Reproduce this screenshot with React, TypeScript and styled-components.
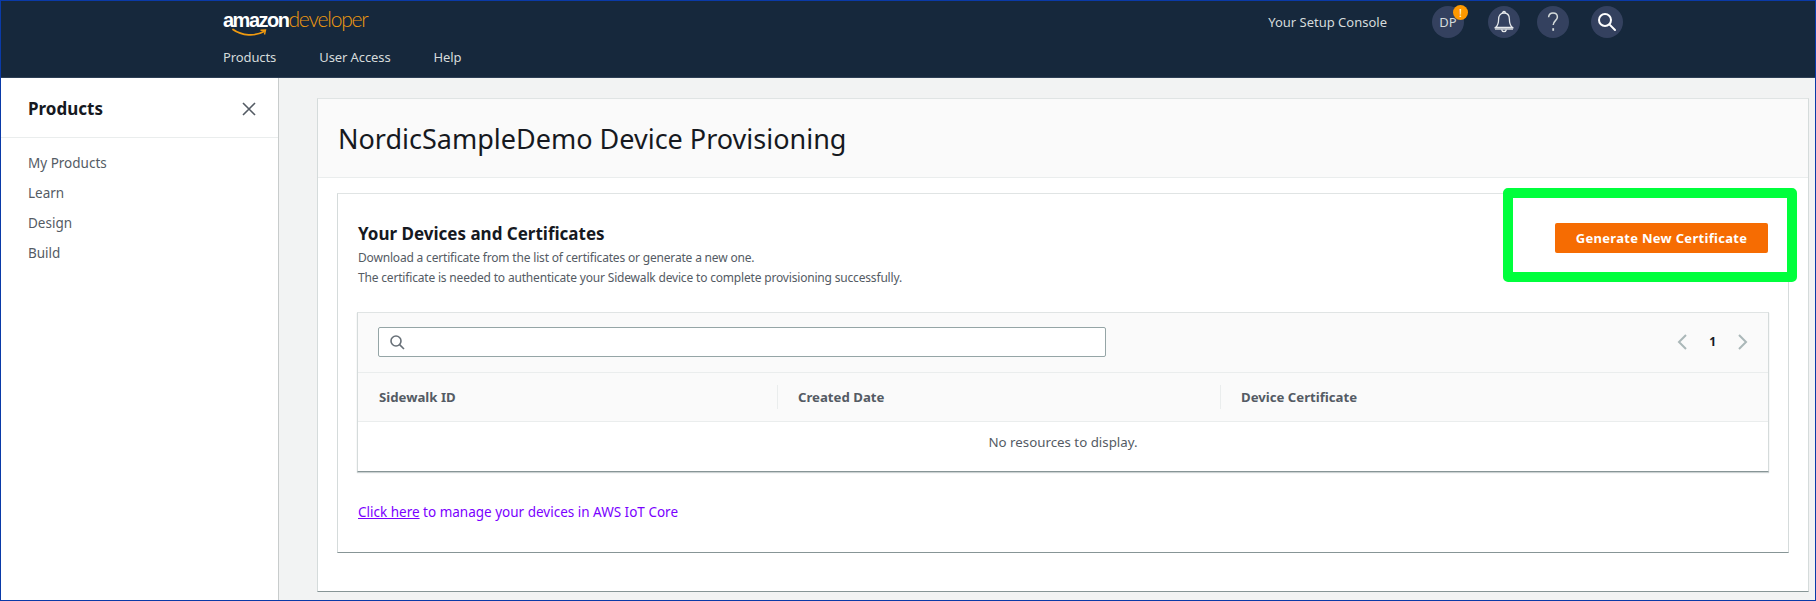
import React from "react";
import styled, { createGlobalStyle } from "styled-components";

const Global = createGlobalStyle`
  html, body { margin: 0; padding: 0; background: #f2f3f3; }
  * { box-sizing: border-box; }
  body { font-family: "Noto Sans", "Liberation Sans", sans-serif; color: #16191f; }
`;

const Frame = styled.div`
  position: relative;
  width: 1816px;
  height: 601px;
  border: 1px solid #0a3aa8;
  overflow: hidden;
  display: flex;
  flex-direction: column;
`;
const Header = styled.header`
  height: 77px;
  flex: none;
  background: #16283c;
  border-bottom: 1px solid #2d3f55;
  padding-left: 222px;
  display: flex;
  justify-content: space-between;
`;
const HeaderLeft = styled.div`
  display: flex;
  flex-direction: column;
`;
const Logo = styled.div`
  position: relative;
  display: flex;
  align-items: baseline;
  height: 33px;
  padding-top: 6px;
  line-height: 24px;
`;
const LogoBold = styled.span`
  font: 700 20px/24px "Liberation Sans", sans-serif;
  letter-spacing: -1.5px;
  color: #fff;
`;
const LogoLight = styled.span`
  font: 300 21px/24px "Lato", sans-serif;
  letter-spacing: -1.2px;
  color: #f09a10;
`;
const LogoSmile = styled.svg`
  position: absolute;
  left: 9px;
  top: 27px;
`;
const Nav = styled.nav`
  margin-top: 13px;
  display: flex;
  gap: 43px;
`;
const NavLink = styled.span`
  font-size: 13px;
  line-height: 20px;
  letter-spacing: -0.1px;
  color: #d5dbdb;
`;
const HeaderRight = styled.div`
  display: flex;
  align-items: flex-start;
  padding-top: 5px;
  padding-right: 192px;
`;
const ConsoleLink = styled.span`
  font-size: 13px;
  line-height: 32px;
  color: #d5dbdb;
  margin-right: 43px;
`;
const Circles = styled.div`
  display: flex;
  gap: 18px;
`;
const Circle = styled.div<{ $gap?: number }>`
  position: relative;
  width: 32px;
  height: 32px;
  border-radius: 50%;
  background: #34415f;
  color: #d5dbdb;
  display: flex;
  align-items: center;
  justify-content: center;
  font-size: 13px;
  margin-left: ${(p) => p.$gap ?? 0}px;
`;
const Badge = styled.span`
  position: absolute;
  right: -4px;
  top: -1px;
  width: 15px;
  height: 15px;
  border-radius: 50%;
  background: #ff9900;
  color: #fff;
  font-size: 11px;
  line-height: 15px;
  text-align: center;
`;
const Body = styled.div`
  flex: 1;
  display: flex;
  min-height: 0;
`;
const Sidebar = styled.aside`
  width: 278px;
  flex: none;
  background: #fff;
  border-right: 1px solid #c8cccc;
`;
const SideHead = styled.div`
  height: 60px;
  padding: 2px 22px 0 27px;
  border-bottom: 1px solid #eaeded;
  display: flex;
  align-items: center;
  justify-content: space-between;
`;
const SideTitle = styled.h2`
  margin: 0;
  font-size: 17px;
  font-weight: 700;
  color: #16191f;
`;
const SideList = styled.ul`
  list-style: none;
  margin: 0;
  padding: 10px 0 0 27px;
`;
const SideItem = styled.li`
  height: 30px;
  line-height: 30px;
  font-size: 13.5px;
  color: #545b64;
`;
const Main = styled.main`
  flex: 1;
  padding: 20px 6px 0 38px;
  background: #f2f3f3;
`;
const Card = styled.section`
  height: 494px;
  background: #fff;
  border: 1px solid #e0e4e4;
  border-bottom-color: #879596;
  border-left-color: #d5dbdb;
  border-right-color: #d5dbdb;
`;
const CardHead = styled.div`
  height: 79px;
  background: #fafafa;
  border-bottom: 1px solid #eaeded;
  padding-left: 20px;
  display: flex;
  align-items: center;
`;
const Title = styled.h1`
  margin: 0;
  font-size: 27px;
  font-weight: 400;
  color: #16191f;
`;
const Inner = styled.div`
  margin: 15px 19px 0 19px;
  height: 360px;
  border: 1px solid #e0e4e4;
  border-left-color: #d5dbdb;
  border-right-color: #d5dbdb;
  border-bottom-color: #879596;
  padding: 0 19px;
`;
const Intro = styled.div`
  height: 118px;
  padding: 27px 0 0 1px;
`;
const IntroTitle = styled.h3`
  margin: 0 0 1px;
  font-size: 17px;
  line-height: 26px;
  font-weight: 700;
  color: #16191f;
`;
const IntroText = styled.p`
  margin: 0;
  font-size: 12px;
  line-height: 20px;
  letter-spacing: -0.18px;
  color: #545b64;
`;
const Table = styled.div`
  height: 160px;
  border: 1px solid #e0e4e4;
  border-left-color: #d5dbdb;
  border-right-color: #d5dbdb;
  border-bottom-color: #879596;
  box-shadow: 0 1px 1px rgba(0, 28, 36, 0.2);
`;
const Toolbar = styled.div`
  height: 60px;
  background: #fafafa;
  border-bottom: 1px solid #eaeded;
  display: flex;
  align-items: center;
  justify-content: space-between;
  padding: 0 19px 2px 20px;
`;
const Search = styled.div`
  width: 728px;
  height: 30px;
  background: #fff;
  border: 1px solid #95a5a6;
  border-radius: 2px;
  display: flex;
  align-items: center;
  padding-left: 10px;
`;
const Pager = styled.div`
  display: flex;
  align-items: center;
  gap: 21px;
`;
const PageNumber = styled.span`
  font-size: 12px;
  font-weight: 700;
  color: #16191f;
`;
const HeadRow = styled.div`
  height: 49px;
  background: #fafafa;
  border-bottom: 1px solid #eaeded;
  display: grid;
  grid-template-columns: 419px 443px 1fr;
  align-items: center;
`;
const HeadCell = styled.div<{ $first?: boolean }>`
  height: 24px;
  line-height: 24px;
  padding-left: ${(p) => (p.$first ? 21 : 20)}px;
  font-size: 13.2px;
  font-weight: 700;
  color: #545b64;
  border-left: ${(p) => (p.$first ? "none" : "1px solid #eaeded")};
`;
const Empty = styled.div`
  text-align: center;
  font-size: 13.3px;
  line-height: 18px;
  padding-top: 11px;
  color: #545b64;
`;
const Manage = styled.p`
  margin: 30px 0 0 1px;
  font-size: 13.5px;
  line-height: 20px;
  color: #7a00ff;
`;
const ManageLink = styled.a`
  color: #7a00ff;
  text-decoration: underline;
`;
const Highlight = styled.div`
  position: absolute;
  left: 1502px;
  top: 187px;
  width: 294px;
  height: 94px;
  border: 10px solid #00ff3c;
  border-radius: 5px;
  background: #fff;
  display: flex;
  justify-content: flex-end;
  padding: 25px 19px 0 0;
`;
const Generate = styled.button`
  width: 213px;
  height: 30px;
  border: none;
  border-radius: 2px;
  background: #f66c02;
  color: #fff;
  font-family: inherit;
  font-size: 13px;
  font-weight: 700;
  letter-spacing: 0.3px;
`;

export default function App() {
  return (
    <Frame>
      <Global />
      <Header>
        <HeaderLeft>
          <Logo>
            <LogoBold>amazon</LogoBold>
            <LogoLight>developer</LogoLight>
            <LogoSmile width="36" height="9" viewBox="0 0 36 9" fill="none">
              <path d="M1 1.5C10 8 23 8.5 32 3.5" stroke="#f09a10" strokeWidth="1.8" strokeLinecap="round" />
              <path d="M28.5 2.2L33.5 2L32.5 6.5" stroke="#f09a10" strokeWidth="1.4" />
            </LogoSmile>
          </Logo>
          <Nav>
            <NavLink>Products</NavLink>
            <NavLink>User Access</NavLink>
            <NavLink>Help</NavLink>
          </Nav>
        </HeaderLeft>
        <HeaderRight>
          <ConsoleLink>Your Setup Console</ConsoleLink>
          <Circles>
            <Circle $gap={2}>
              DP
              <Badge>!</Badge>
            </Circle>
            <Circle $gap={6}>
              <svg width="20" height="24" viewBox="0 0 20 24" fill="none" stroke="#e6e9eb" strokeWidth="1.3">
                <path d="M8.6 3.2C8.6 2.2 9.2 1.5 10 1.5s1.4.7 1.4 1.7" />
                <path d="M10 3c3.6 0 5.4 2.8 5.4 6.2 0 3.6.8 6.4 3.1 8.3H1.5c2.3-1.9 3.1-4.7 3.1-8.3C4.6 5.8 6.4 3 10 3z" />
                <path d="M1 19h18" />
                <path d="M7.6 19.5c.3 1.4 1.2 2.2 2.4 2.2s2.1-.8 2.4-2.2" />
              </svg>
            </Circle>
            <Circle $gap={-1}>
              <svg width="14" height="22" viewBox="0 0 14 22" fill="none" stroke="#d5dbdb" strokeWidth="1.5">
                <path d="M2.6 6.2C2.8 3.6 4.6 2 7 2c2.6 0 4.4 1.7 4.4 4 0 3.6-4.2 3.8-4.2 8" />
                <path d="M7.2 17.2v2.6" strokeWidth="1.8" />
              </svg>
            </Circle>
            <Circle $gap={4}>
              <svg width="20" height="20" viewBox="0 0 20 20" fill="none" stroke="#fff" strokeWidth="2">
                <circle cx="8" cy="8" r="6" />
                <path d="M12.4 12.4L18 18" strokeLinecap="round" />
              </svg>
            </Circle>
          </Circles>
        </HeaderRight>
      </Header>
      <Body>
        <Sidebar>
          <SideHead>
            <SideTitle>Products</SideTitle>
            <svg width="14" height="14" viewBox="0 0 14 14" fill="none" stroke="#545b64" strokeWidth="1.6">
              <path d="M1 1l12 12M13 1L1 13" />
            </svg>
          </SideHead>
          <SideList>
            <SideItem>My Products</SideItem>
            <SideItem>Learn</SideItem>
            <SideItem>Design</SideItem>
            <SideItem>Build</SideItem>
          </SideList>
        </Sidebar>
        <Main>
          <Card>
            <CardHead>
              <Title>NordicSampleDemo Device Provisioning</Title>
            </CardHead>
            <Inner>
              <Intro>
                <IntroTitle>Your Devices and Certificates</IntroTitle>
                <IntroText>Download a certificate from the list of certificates or generate a new one.</IntroText>
                <IntroText>The certificate is needed to authenticate your Sidewalk device to complete provisioning successfully.</IntroText>
              </Intro>
              <Table>
                <Toolbar>
                  <Search>
                    <svg width="16" height="16" viewBox="0 0 16 16" fill="none" stroke="#687078" strokeWidth="1.6">
                      <circle cx="7" cy="7" r="5" />
                      <path d="M10.6 10.6L15 15" />
                    </svg>
                  </Search>
                  <Pager>
                    <svg width="12" height="16" viewBox="0 0 12 16" fill="none" stroke="#aab7b8" strokeWidth="2">
                      <path d="M10 1L3 8l7 7" />
                    </svg>
                    <PageNumber>1</PageNumber>
                    <svg width="12" height="16" viewBox="0 0 12 16" fill="none" stroke="#aab7b8" strokeWidth="2">
                      <path d="M2 1l7 7-7 7" />
                    </svg>
                  </Pager>
                </Toolbar>
                <HeadRow>
                  <HeadCell $first>Sidewalk ID</HeadCell>
                  <HeadCell>Created Date</HeadCell>
                  <HeadCell>Device Certificate</HeadCell>
                </HeadRow>
                <Empty>No resources to display.</Empty>
              </Table>
              <Manage>
                <ManageLink href="#">Click here</ManageLink> to manage your devices in AWS IoT Core
              </Manage>
            </Inner>
          </Card>
        </Main>
      </Body>
      <Highlight>
        <Generate>Generate New Certificate</Generate>
      </Highlight>
    </Frame>
  );
}
